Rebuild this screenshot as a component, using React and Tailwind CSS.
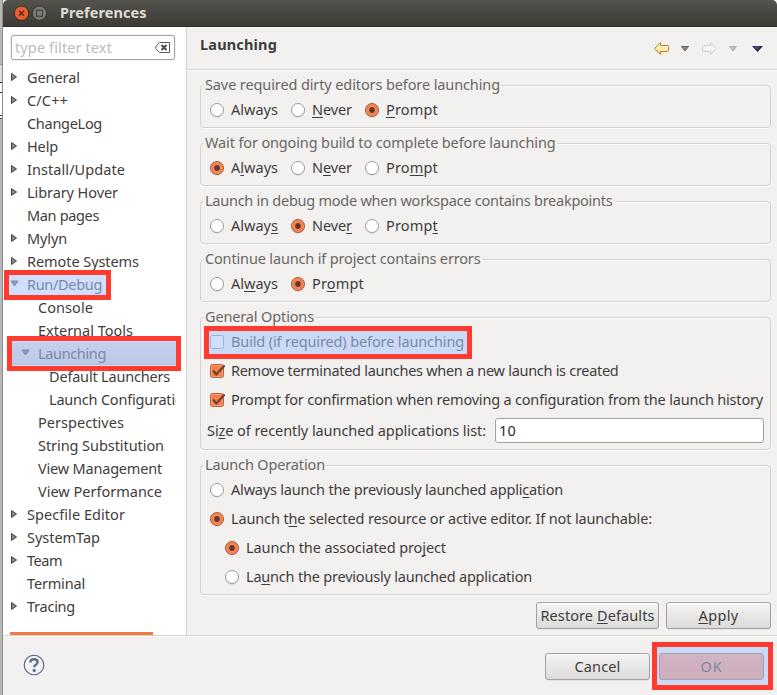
import { useLayoutEffect, useRef, useState } from "react";

// Label set to a fixed measure; "&" marks the mnemonic character.
function Label({ text, w, className = "pb-[2px] pl-px" }) {
  const ref = useRef(null);
  const [spacing, setSpacing] = useState(0);
  const at = text.indexOf("&");
  const plain = text.replace("&", "");
  useLayoutEffect(() => {
    const natural = ref.current.getBoundingClientRect().width - spacing * plain.length;
    setSpacing((w - natural) / plain.length);
  }, []);
  return (
    <span
      ref={ref}
      className={`inline-block shrink-0 whitespace-pre leading-[20px] ${className}`}
      style={{ letterSpacing: `${spacing}px` }}
    >
      {at < 0 ? (
        plain
      ) : (
        <>
          {plain.slice(0, at)}
          <span className="underline decoration-1 underline-offset-2 [text-decoration-skip-ink:none]">{plain[at]}</span>
          {plain.slice(at + 1)}
        </>
      )}
    </span>
  );
}

const tree = [
  ["General", 54, 0, "closed"],
  ["C/C++", 42, 0, "closed"],
  ["ChangeLog", 76, 0],
  ["Help", 32, 0, "closed"],
  ["Install/Update", 99, 0, "closed"],
  ["Library Hover", 92, 0, "closed"],
  ["Man pages", 73, 0],
  ["Mylyn", 41, 0, "closed"],
  ["Remote Systems", 113, 0, "closed"],
  ["Run/Debug", 76, 0, "open"],
  ["Console", 56, 1],
  ["External Tools", 96, 1],
  ["Launching", 69, 1, "open", true],
  ["Default Launchers", 122, 2],
  ["Launch Configurations", 151, 2],
  ["Perspectives", 87, 1],
  ["String Substitution", 127, 1],
  ["View Management", 125, 1],
  ["View Performance", 125, 1],
  ["Specfile Editor", 99, 0, "closed"],
  ["SystemTap", 74, 0, "closed"],
  ["Team", 36, 0, "closed"],
  ["Terminal", 59, 0],
  ["Tracing", 49, 0, "closed"],
];

const indents = ["pl-0", "pl-[11px]", "pl-[22px]"];

function Expander({ state }) {
  return (
    <svg className="h-[9px] w-[16px] shrink-0" viewBox="0 0 16 9">
      {state === "closed" && <path d="M1.500 .5v7l5-3.500z" fill="#888" stroke="#444" strokeWidth="1" />}
      {state === "open" && <path d="M1 1h7L4.500 6z" fill="#666" stroke="#444" strokeWidth="1" />}
    </svg>
  );
}

function Tree() {
  return (
    <div className="ml-[7px] mt-[5px] h-[569px] w-[166px] overflow-hidden">
      {tree.map(([name, w, level, state, selected]) => (
        <div
          key={name}
          className={`flex h-[23px] items-center ${indents[level]} ${selected ? "bg-gradient-to-b from-[#e2dfdd] to-[#d2cecb] shadow-[inset_0_-1px_0_#b9b5b1]" : ""}`}
        >
          <Expander state={state} />
          <Label text={name} w={w} />
        </div>
      ))}
      <div className="mt-[14px] h-[3px] w-[143px] bg-[#f37a48]" />
    </div>
  );
}

function Radio({ on }) {
  return (
    <svg className="size-[16px] shrink-0" viewBox="0 0 16 16">
      <circle cx="8" cy="8.700" r="7" fill="#dedcda" />
      <circle cx="8" cy="8" r="6.500" fill={on ? "#f0743f" : "#fff"} stroke={on ? "#a8593b" : "#a09c98"} />
      {on && <circle cx="8" cy="8" r="5.300" fill="none" stroke="#f9936a" strokeWidth="1" />}
      {on && <circle cx="8" cy="8" r="3.700" fill="#f69a76" />}
      {on && <circle cx="8" cy="8" r="2.900" fill="#6b3723" />}
    </svg>
  );
}

function Check({ on }) {
  return (
    <svg className="size-[16px] shrink-0" viewBox="0 0 16 16">
      <rect x="1.500" y="1.500" width="13" height="13" rx="2" fill={on ? "#f2814f" : "#fff"} stroke={on ? "#bd5f3b" : "#9a9692"} />
      {on && <rect x="2.500" y="2.500" width="11" height="11" rx="1" fill="none" stroke="#fa9c74" />}
      {on && <path d="M4 7.500l3.300 4L15.700 2.500" fill="none" stroke="#6b3f2d" strokeWidth="2.100" />}
    </svg>
  );
}

function Choice({ text, w, on, check, className = "" }) {
  return (
    <div className={`flex h-[29px] items-center gap-[5px] ${className}`}>
      {check ? <Check on={on} /> : <Radio on={on} />}
      <Label text={text} w={w} />
    </div>
  );
}

function Group({ title, w, className = "", children }) {
  return (
    <section
      className={`flex w-[571px] flex-col rounded-[4px] border border-[#d5d3d1] shadow-[0_1px_0_#fbfbfa,inset_0_1px_0_#fbfbfa] ${className}`}
    >
      <div className="-mt-[12px] mb-px ml-[3px] flex h-[20px] self-start bg-[#f2f1f0] px-px text-[#6a6764]">
        <Label text={title} w={w} className="" />
      </div>
      <div className="flex flex-col pl-[8px]">{children}</div>
    </section>
  );
}

function Trio({ labels, selected }) {
  return (
    <div className="flex">
      {labels.map((text, i) => {
        const kind = text.replace("&", "");
        return (
          <Choice
            key={text}
            text={text}
            on={i === selected}
            w={kind === "Always" ? 48 : kind === "Never" ? 41 : 53}
            className={i === 0 ? "w-[81px]" : "w-[74px]"}
          />
        );
      })}
    </div>
  );
}

function Button({ text, w, className = "", primary }) {
  return (
    <button
      className={`flex h-[27px] items-center justify-center rounded-[3px] border ${primary ? "border-[#a5745f] bg-gradient-to-b from-[#ff9f80] to-[#fb8f70]" : "border-[#a3a09d] bg-gradient-to-b from-[#f5f4f4] to-[#dcdbda] shadow-[inset_0_1px_0_#fff,0_1px_0_#e6e4e2]"} ${className}`}
    >
      <Label text={text} w={w} className="pb-[2px]" />
    </button>
  );
}

function ArrowGlyph({ forward }) {
  return (
    <svg className="h-[13px] w-[15px]" viewBox="0 0 15 13">
      <defs>
        <linearGradient id="gold" x1="0" y1="0" x2="0" y2="1">
          <stop offset="0" stopColor="#fffdf0" />
          <stop offset="1" stopColor="#fbdc7e" />
        </linearGradient>
      </defs>
      <path
        d={forward ? "M14.500 6.500L8.500 .7V3.500H1.500Q.5 3.500 .5 4.500V8.500Q.5 9.500 1.500 9.500H8.500V12.300Z" : "M.5 6.500L6.500 .7V3.500H13.500Q14.500 3.500 14.500 4.500V8.500Q14.500 9.500 13.500 9.500H6.500V12.300Z"}
        fill={forward ? "#f5f4f3" : "url(#gold)"}
        stroke={forward ? "#cfcdcb" : "#b9811b"}
      />
    </svg>
  );
}

function Toolbar() {
  return (
    <div className="flex items-center pt-[1px]">
      <ArrowGlyph />
      <svg className="ml-[12px] h-[6px] w-[8px]" viewBox="0 0 8 6"><path d="M.5 .5h7L4 5z" fill="#8a8885" stroke="#64625f" /></svg>
      <span className="ml-[13px] flex"><ArrowGlyph forward /></span>
      <svg className="ml-[12px] h-[6px] w-[8px]" viewBox="0 0 8 6"><path d="M.5 .5h7L4 5z" fill="#c2c0be" stroke="#b1afad" /></svg>
      <svg className="ml-[15px] h-[6px] w-[11px]" viewBox="0 0 11 6"><path d="M0 0h11L5.500 6z" fill="#2c2248" /><path d="M1.500 .6h7L5 3.800z" fill="#514b70" /></svg>
    </div>
  );
}

export default function App() {
  return (
    <div className="relative flex h-[695px] w-[777px] overflow-hidden bg-[#f2f1f0] font-['Noto_Sans','Open_Sans',sans-serif] text-[14.5px] text-[#3f3d3b]">
      <div className="flex w-[3px] shrink-0 flex-col border-r border-[#8f8d8a] bg-[#b9b7b5]">
        <div className="h-[65px] border-b border-[#999]" />
        <div className="h-[17px] bg-[#dcdbda]" />
        <div className="h-[11px] border-y border-[#222] bg-white" />
        <div className="h-[22px] bg-white" />
        <div className="h-[4px] border-y border-[#444] bg-white" />
      </div>
      <div className="flex flex-1 flex-col">
        <header className="flex h-[27px] items-center rounded-t-[5px] border-b border-[#302f2c] bg-gradient-to-b from-[#53524b] to-[#3c3b37] pl-[10px]">
          <svg className="h-[18px] w-[36px]" viewBox="0 0 36 18">
            <circle cx="8.500" cy="9.200" r="7.200" fill="#ed5f31" stroke="#33322f" />
            <path d="M6 6.700l5 5M11 6.700l-5 5" stroke="#5a2412" strokeWidth="1.300" />
            <circle cx="26.500" cy="9.200" r="7.200" fill="#7b7970" stroke="#33322f" />
            <rect x="23.500" y="6.200" width="6" height="6" fill="none" stroke="#3b3a36" />
          </svg>
          <Label text="Preferences" w={87.5} className="ml-[10px] pb-[2px] pl-px font-bold text-[#dfdbd2]" />
        </header>
        <div className="flex h-[608px]">
          <aside className="flex h-[608px] w-[184px] shrink-0 flex-col border-r border-[#d5d3d1] bg-white">
            <div className="ml-[7px] mt-[7px] flex h-[27px] w-[166px] bg-[#f2f1f0] p-px">
              <div className="flex h-[25px] w-[164px] items-center justify-between rounded-[3px] border border-[#aaa69f] bg-white pl-[3px] pr-[4px]">
                <Label text="type filter text" w={97} className="pb-[2px] text-[#c0bbb6]" />
                <svg className="h-[11px] w-[15px]" viewBox="0 0 15 11">
                  <path d="M4.500 .5H14.500V10.500H4.500L.8 6.500V4.500Z" fill="#fff" stroke="#5b5956" />
                  <path d="M6.500 3l5 5M11.500 3l-5 5" stroke="#4a4846" strokeWidth="1.900" />
                </svg>
              </div>
            </div>
            <Tree />
          </aside>
          <main className="flex flex-1 flex-col">
            <div className="flex h-[43px] items-center justify-between border-b border-[#d5d3d1] pl-[12px] pr-[14px] shadow-[0_1px_0_#fbfbfa]">
              <Label text="Launching" w={78} className="-mt-[6px] pb-[2px] pl-px font-bold" />
              <Toolbar />
            </div>
            <div className="flex flex-col gap-[15px] pl-[13px] pt-[15px]">
              <Group title="Save required dirty editors before launching" w={295} className="h-[43px]">
                <Trio labels={["Always", "&Never", "&Prompt"]} selected={2} />
              </Group>
              <Group title="Wait for ongoing build to complete before launching" w={350.5} className="h-[43px]">
                <Trio labels={["A&lways", "N&ever", "Pro&mpt"]} selected={0} />
              </Group>
              <Group title="Launch in debug mode when workspace contains breakpoints" w={407.5} className="h-[43px]">
                <Trio labels={["Alway&s", "Neve&r", "Promp&t"]} selected={1} />
              </Group>
              <Group title="Continue launch if project contains errors" w={275.5} className="h-[43px]">
                <Trio labels={["Al&ways", "Pr&ompt"]} selected={1} />
              </Group>
              <Group title="General Options" w={109} className="h-[133px]">
                <Choice check text="Build (if required) before launching" w={234} />
                <Choice check on text="Remove terminated launches when a new launch is created" w={388.5} />
                <Choice check on text="Prompt for confirmation when removing a configuration from the launch history" w={533} />
                <div className="-ml-[3px] flex h-[33px] items-center">
                  <Label text="Si&ze of recently launched applications list:" w={280} />
                  <div className="ml-[9px] flex h-[25px] w-[269px] items-center rounded-[3px] border border-[#a5a19a] bg-white pl-[3px] text-[#2e2c2a]">
                    <Label text="10" w={17} className="pb-[2px]" />
                  </div>
                </div>
              </Group>
              <Group title="Launch Operation" w={120} className="h-[130px]">
                <Choice text="Always launch the previously launched appli&cation" w={333} />
                <Choice on text="Launch t&he selected resource or active editor. If not launchable:" w={422} />
                <Choice on text="Launch the associated pro&ject" w={201} className="ml-[15px]" />
                <Choice text="La&unch the previously launched application" w={287} className="ml-[15px]" />
              </Group>
            </div>
            <div className="mt-[7px] flex justify-end gap-[7px] pr-[6px]">
              <Button text="Restore &Defaults" w={114} className="w-[123px]" />
              <Button text="&Apply" w={40} className="w-[105px]" />
            </div>
          </main>
        </div>
        <footer className="flex h-[60px] items-center border-t border-[#d5d3d1] pl-[20px] pr-[13px] shadow-[inset_0_1px_0_#fbfbfa]">
          <svg className="-mt-px size-[22px]" viewBox="0 0 22 22">
            <circle cx="11" cy="11" r="9.800" fill="#f4f4f5" stroke="#4f6285" strokeWidth="1.100" />
            <path d="M7.300 8.500Q7.300 5.200 11 5.200Q14.600 5.200 14.600 8.100Q14.600 9.700 12.800 10.800Q11.200 11.800 11.200 13.200" fill="none" stroke="#5b6d91" strokeWidth="2.400" />
            <circle cx="11.200" cy="16.400" r="1.600" fill="#5b6d91" />
          </svg>
          <div className="ml-auto flex gap-[9px] pt-[2px]">
            <Button text="Cancel" w={46} className="w-[105px]" />
            <Button text="OK" w={22} primary className="w-[105px]" />
          </div>
        </footer>
      </div>
      <div className="absolute left-[4px] top-[270px] h-[30px] w-[107px] border-[5px] border-[#ff3a2f] bg-[#aac5fb]/55" />
      <div className="absolute left-[7px] top-[336px] h-[35px] w-[174px] border-[5px] border-[#ff3a2f] bg-[#aac5fb]/55" />
      <div className="absolute left-[204px] top-[326px] h-[33px] w-[268px] border-[5px] border-[#ff3a2f] bg-[#aac5fb]/55" />
      <div className="absolute left-[652px] top-[642px] h-[48px] w-[121px] border-[5px] border-[#ff3a2f] bg-[#aac5fb]/55" />
    </div>
  );
}
